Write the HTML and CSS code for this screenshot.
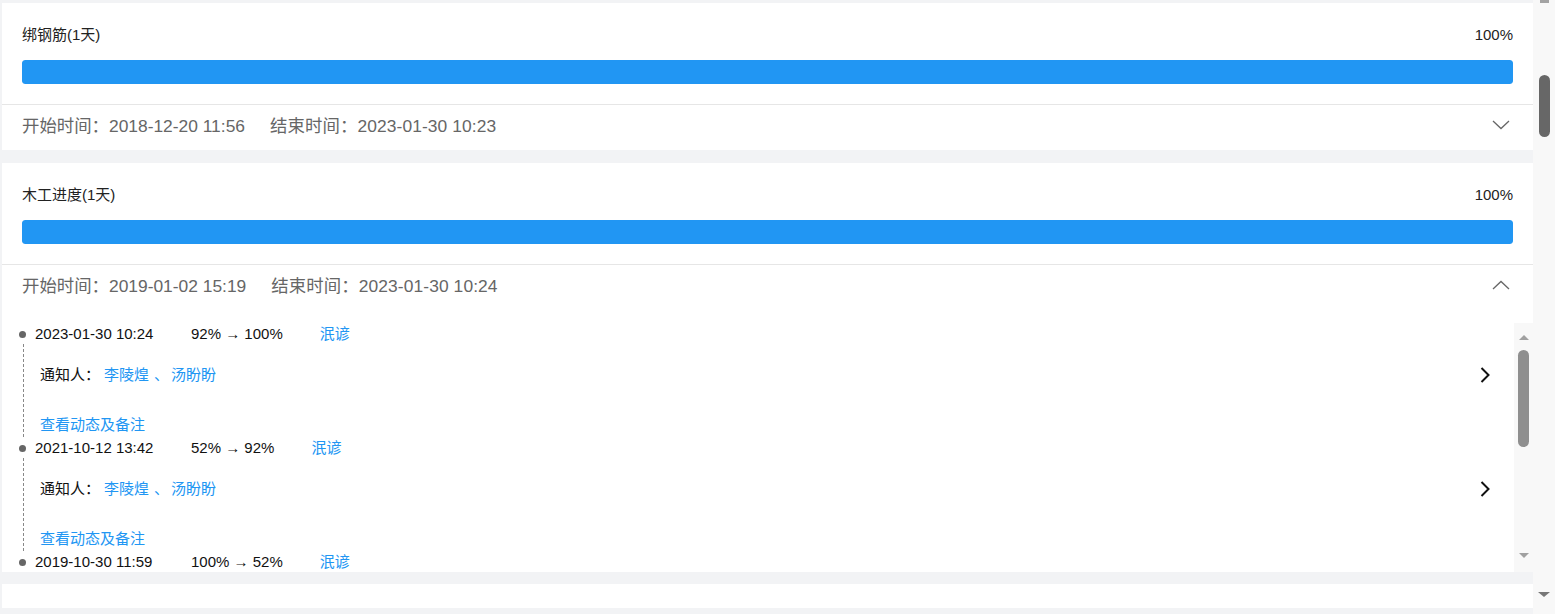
FILE: index.html
```html
<!DOCTYPE html>
<html lang="zh-CN">

<head>
    <meta charset="UTF-8">
    <meta name="viewport" content="width=device-width, initial-scale=1.0">
    <title>施工进度</title>
    <link rel="stylesheet" href="styles.css">
</head>

<body>
    <div class="viewport">
        <main class="page">
            <!-- 绑钢筋 -->
            <section class="card">
                <div class="card-top">
                    <div class="task-row">
                        <span class="task-name">绑钢筋(1天)</span>
                        <span class="task-pct">100%</span>
                    </div>
                    <div class="bar"><div class="bar-fill" style="width: 100%;"></div></div>
                </div>
                <div class="times">
                    <span>开始时间：2018-12-20 11:56</span>
                    <span class="end-time">结束时间：2023-01-30 10:23</span>
                    <svg class="toggle" width="18" height="10" viewBox="0 0 18 10">
                        <path d="M1 1 L9 8.5 L17 1" fill="none" stroke="#666" stroke-width="1.3" />
                    </svg>
                </div>
            </section>

            <!-- 木工进度 (expanded) -->
            <section class="card card-open">
                <div class="card-top">
                    <div class="task-row">
                        <span class="task-name">木工进度(1天)</span>
                        <span class="task-pct">100%</span>
                    </div>
                    <div class="bar"><div class="bar-fill" style="width: 100%;"></div></div>
                </div>
                <div class="times">
                    <span>开始时间：2019-01-02 15:19</span>
                    <span class="end-time">结束时间：2023-01-30 10:24</span>
                    <svg class="toggle" width="18" height="10" viewBox="0 0 18 10">
                        <path d="M1 9 L9 1.5 L17 9" fill="none" stroke="#666" stroke-width="1.3" />
                    </svg>
                </div>

                <div class="history">
                    <div class="timeline">
                        <div class="item">
                            <div class="item-head">
                                <span class="dot"></span>
                                <span class="date">2023-01-30 10:24</span>
                                <span class="change">92% → 100%</span>
                                <span class="person">泯谚</span>
                            </div>
                            <div class="item-body">
                                <div class="notify">
                                    <span class="notify-label">通知人：</span>
                                    <span class="name">李陵煌</span><span class="sep">、</span><span class="name">汤盼盼</span>
                                    <svg class="arrow" width="10" height="16" viewBox="0 0 10 16">
                                        <path d="M1.5 1 L8.5 8 L1.5 15" fill="none" stroke="#111" stroke-width="2" />
                                    </svg>
                                </div>
                                <a class="more" href="#">查看动态及备注</a>
                            </div>
                        </div>

                        <div class="item">
                            <div class="item-head">
                                <span class="dot"></span>
                                <span class="date">2021-10-12 13:42</span>
                                <span class="change">52% → 92%</span>
                                <span class="person">泯谚</span>
                            </div>
                            <div class="item-body">
                                <div class="notify">
                                    <span class="notify-label">通知人：</span>
                                    <span class="name">李陵煌</span><span class="sep">、</span><span class="name">汤盼盼</span>
                                    <svg class="arrow" width="10" height="16" viewBox="0 0 10 16">
                                        <path d="M1.5 1 L8.5 8 L1.5 15" fill="none" stroke="#111" stroke-width="2" />
                                    </svg>
                                </div>
                                <a class="more" href="#">查看动态及备注</a>
                            </div>
                        </div>

                        <div class="item">
                            <div class="item-head">
                                <span class="dot"></span>
                                <span class="date">2019-10-30 11:59</span>
                                <span class="change">100% → 52%</span>
                                <span class="person">泯谚</span>
                            </div>
                        </div>
                    </div>

                    <!-- inner scrollbar -->
                    <div class="inner-scroll">
                        <span class="tri-up"></span>
                        <span class="inner-thumb"></span>
                        <span class="tri-down"></span>
                    </div>
                </div>
            </section>

            <section class="card card-next"></section>
        </main>

        <!-- page scrollbar -->
        <aside class="page-scroll">
            <span class="page-arrow-top"></span>
            <span class="page-thumb"></span>
            <span class="page-arrow-down"></span>
        </aside>
    </div>
</body>

</html>
```

FILE: styles.css
```css
/* Page base */
body {
    margin: 0;
    padding: 0;
    background-color: #f2f3f5;
    font-family: "Liberation Sans", "Noto Sans CJK SC", sans-serif;
    color: #222;
    overflow: hidden;
}

.viewport {
    display: flex;
    height: 614px;
}

.page {
    flex: 1;
    padding: 3px 0 0 2px;
}

/* Cards */
.card {
    background-color: #fff;
    margin-bottom: 13px;
}

.card-open {
    margin-bottom: 12px;
}

.card-next {
    height: 24px;
}

.card-top {
    padding: 22px 20px 20px;
}

.task-row {
    display: flex;
    justify-content: space-between;
    font-size: 15px;
    line-height: 20px;
    color: #222;
}

.bar {
    margin-top: 15px;
    height: 24px;
    background-color: #e8eef5;
    border-radius: 3px;
    overflow: hidden;
}

.bar-fill {
    height: 100%;
    background-color: #2196f3;
    border-radius: 3px;
}

/* Start / end row */
.times {
    display: flex;
    align-items: center;
    height: 39px;
    padding: 0 23px 6px 20px;
    border-top: 1px solid #e6e6e6;
    font-size: 17.4px;
    color: #666;
}

.end-time {
    margin-left: 25px;
    letter-spacing: 0.1px;
}

.toggle {
    margin-left: auto;
}

/* History list */
.history {
    display: flex;
    height: 249px;
    margin-top: 13px;
}

.timeline {
    flex: 1;
    overflow: hidden;
    font-size: 15px;
    line-height: 20px;
    color: #111;
}

.item-head {
    display: flex;
    align-items: center;
    height: 20px;
    padding-top: 1px;
}

.dot {
    width: 7px;
    height: 7px;
    margin-left: 17px;
    margin-right: 9px;
    border-radius: 50%;
    background-color: #666;
}

.date {
    width: 156px;
}

.change {
    margin-right: 37px;
}

.person,
.name,
.sep,
.more {
    color: #2196f3;
}

.item-body {
    margin-left: 21px;
    padding: 21px 0 2px 16px;
    border-left: 1px dashed #888;
}

.notify {
    display: flex;
    align-items: center;
    height: 20px;
    padding-right: 24px;
}

.notify-label {
    margin-right: 4px;
}

.sep {
    margin: 0 2px 0 5px;
}

.arrow {
    margin-left: auto;
}

.more {
    display: block;
    margin-top: 30px;
    text-decoration: none;
}

/* Inner scrollbar */
.inner-scroll {
    display: flex;
    flex-direction: column;
    align-items: center;
    width: 19px;
    background-color: #f8f8f8;
}

.tri-up {
    margin-top: 12px;
    border-left: 5px solid transparent;
    border-right: 5px solid transparent;
    border-bottom: 5px solid #a0a0a0;
}

.inner-thumb {
    width: 11px;
    height: 97px;
    margin-top: 10px;
    border-radius: 6px;
    background-color: #8f8f8f;
}

.tri-down {
    margin-top: auto;
    margin-bottom: 14px;
    border-left: 5px solid transparent;
    border-right: 5px solid transparent;
    border-top: 5px solid #a0a0a0;
}

/* Page scrollbar */
.page-scroll {
    display: flex;
    flex-direction: column;
    align-items: center;
    width: 22px;
    background-color: #f8f8f8;
}

.page-arrow-top {
    width: 9px;
    height: 3px;
    background-color: #a3a3a3;
}

.page-thumb {
    width: 11px;
    height: 62px;
    margin-top: 72px;
    border-radius: 6px;
    background-color: #676767;
}

.page-arrow-down {
    margin-top: auto;
    margin-bottom: 17px;
    border-left: 6px solid transparent;
    border-right: 6px solid transparent;
    border-top: 5px solid #777;
}
```
